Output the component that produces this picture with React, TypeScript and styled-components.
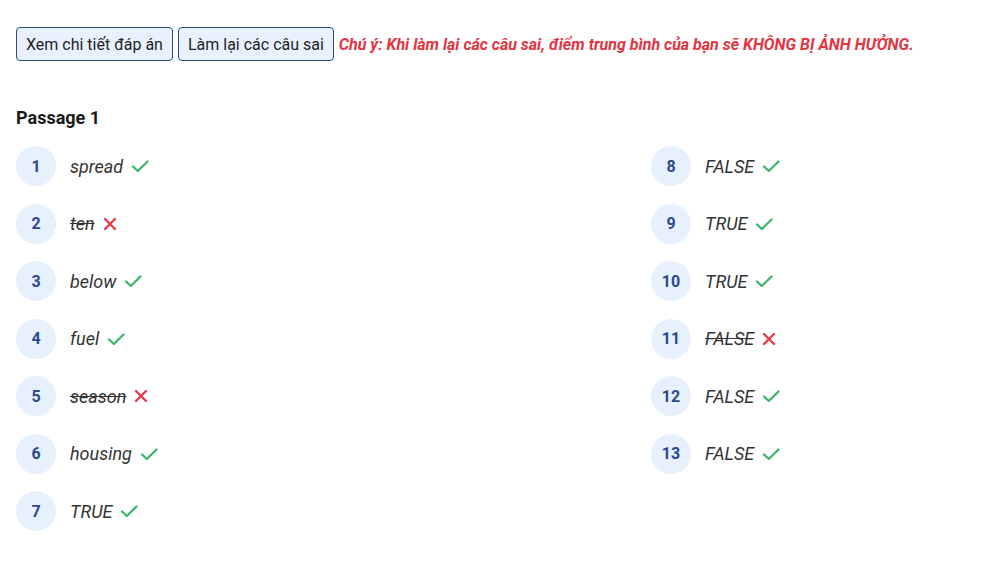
import { createGlobalStyle } from "styled-components";
import styled from "styled-components";

const GlobalStyle = createGlobalStyle`
  body {
    margin: 0;
    background: #ffffff;
    font-family: Roboto, "Noto Sans", Arial, sans-serif;
    color: #212529;
  }
`;

const Page = styled.div`
  padding: 27px 16px 20px;
`;

const Toolbar = styled.div`
  display: flex;
  align-items: center;
  gap: 5px;
`;

const ActionButton = styled.button`
  height: 34px;
  padding: 0 9px;
  background: #e8f1fd;
  border: 1px solid #2c4a85;
  border-radius: 4px;
  font-family: Roboto, Arial, sans-serif;
  font-size: 16px;
  color: #1f1f1f;
  cursor: pointer;
`;

const Notice = styled.span`
  font-size: 16px;
  font-weight: 700;
  font-style: italic;
  color: #e4343f;
`;

const PassageTitle = styled.h3`
  margin: 46px 0 18px;
  font-size: 18px;
  font-weight: 700;
  color: #1a1a1a;
`;

const Columns = styled.div`
  display: grid;
  grid-template-columns: 635px 1fr;
`;

const List = styled.div`
  display: flex;
  flex-direction: column;
  gap: 17.5px;
`;

const Row = styled.div`
  display: flex;
  align-items: center;
  height: 40px;
`;

const Num = styled.span`
  width: 40px;
  height: 40px;
  border-radius: 50%;
  background: #e7f0fd;
  color: #2d4a8e;
  font-weight: 700;
  font-size: 16px;
  display: flex;
  align-items: center;
  justify-content: center;
  margin-right: 14px;
`;

const Answer = styled.span<{ $wrong?: boolean }>`
  font-size: 18px;
  font-style: italic;
  color: #333333;
  text-decoration: ${(p) => (p.$wrong ? "line-through" : "none")};
  margin-right: 8px;
`;

const Check = () => (
  <svg width="18" height="14" viewBox="0 0 18 14" fill="none">
    <path d="M2 7.5 L6.8 12 L16.5 2.5" stroke="#3cb46c" strokeWidth="2.3" strokeLinecap="round" strokeLinejoin="round" />
  </svg>
);

const Cross = () => (
  <svg width="14" height="14" viewBox="0 0 14 14" fill="none">
    <path d="M2 2 L12 12 M12 2 L2 12" stroke="#e63946" strokeWidth="2.3" strokeLinecap="round" />
  </svg>
);

type Item = { n: number; text: string; ok: boolean };

const left: Item[] = [
  { n: 1, text: "spread", ok: true },
  { n: 2, text: "ten", ok: false },
  { n: 3, text: "below", ok: true },
  { n: 4, text: "fuel", ok: true },
  { n: 5, text: "season", ok: false },
  { n: 6, text: "housing", ok: true },
  { n: 7, text: "TRUE", ok: true },
];

const right: Item[] = [
  { n: 8, text: "FALSE", ok: true },
  { n: 9, text: "TRUE", ok: true },
  { n: 10, text: "TRUE", ok: true },
  { n: 11, text: "FALSE", ok: false },
  { n: 12, text: "FALSE", ok: true },
  { n: 13, text: "FALSE", ok: true },
];

const renderList = (items: Item[]) => (
  <List>
    {items.map((it) => (
      <Row key={it.n}>
        <Num>{it.n}</Num>
        <Answer $wrong={!it.ok}>{it.text}</Answer>
        {it.ok ? <Check /> : <Cross />}
      </Row>
    ))}
  </List>
);

export default function App() {
  return (
    <Page>
      <GlobalStyle />
      <Toolbar>
        <ActionButton>Xem chi tiết đáp án</ActionButton>
        <ActionButton>Làm lại các câu sai</ActionButton>
        <Notice>Chú ý: Khi làm lại các câu sai, điểm trung bình của bạn sẽ KHÔNG BỊ ẢNH HƯỞNG.</Notice>
      </Toolbar>
      <PassageTitle>Passage 1</PassageTitle>
      <Columns>
        {renderList(left)}
        {renderList(right)}
      </Columns>
    </Page>
  );
}
